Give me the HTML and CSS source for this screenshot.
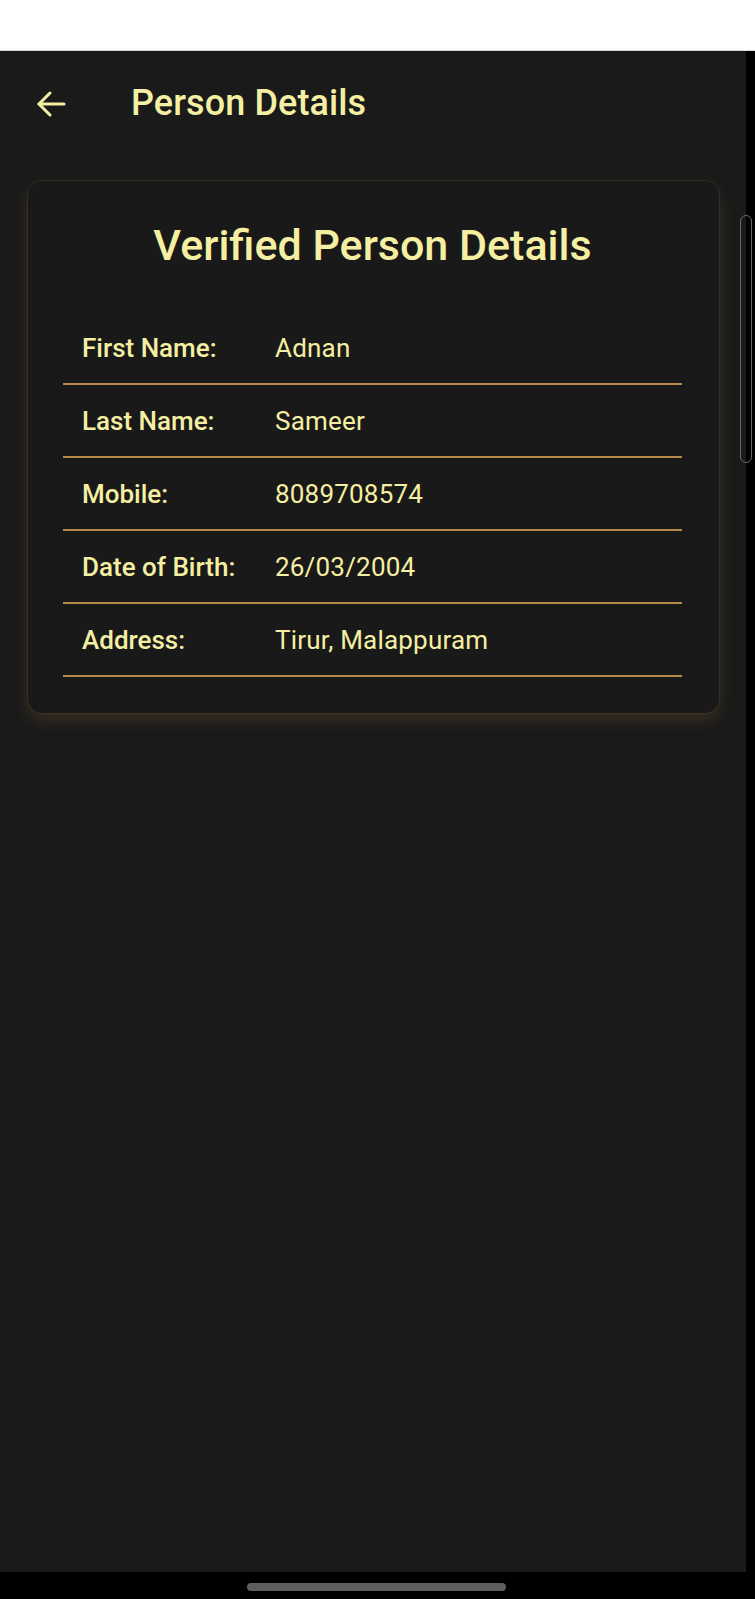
FILE: index.html
```html
<!DOCTYPE html>
<html lang="en">
<head>
<meta charset="utf-8">
<title>Person Details</title>
<link rel="stylesheet" href="styles.css">
</head>
<body>
<div class="statusbar"></div>
<div class="device">
  <div class="screen">
    <header class="appbar">
      <button class="back" aria-label="Back">
        <svg width="30" height="26" viewBox="0 0 30 26" fill="none" stroke="currentColor" stroke-width="3" stroke-linecap="round" stroke-linejoin="round"><path d="M28 13H3"/><path d="M14 2L3 13L14 24"/></svg>
      </button>
      <h1 class="appbar-title">Person Details</h1>
    </header>
    <section class="card">
      <h2 class="card-title">Verified Person Details</h2>
      <div class="rows">
        <div class="row"><span class="label">First Name:</span><span class="value">Adnan</span></div>
        <div class="row"><span class="label">Last Name:</span><span class="value">Sameer</span></div>
        <div class="row"><span class="label">Mobile:</span><span class="value">8089708574</span></div>
        <div class="row"><span class="label">Date of Birth:</span><span class="value">26/03/2004</span></div>
        <div class="row"><span class="label">Address:</span><span class="value">Tirur, Malappuram</span></div>
      </div>
    </section>
    <div class="scroll-thumb"></div>
  </div>
  <div class="edge"></div>
</div>
<div class="navbar"><div class="pill"></div></div>
</body>
</html>
```
FILE: styles.css
```css
html, body {
  margin: 0;
  padding: 0;
}
body {
  width: 755px;
  height: 1599px;
  background: #000;
  font-family: Roboto, "Noto Sans", "Liberation Sans", sans-serif;
  color: #f4efa2;
  overflow: hidden;
}
.statusbar {
  height: 51px;
  background: #ffffff;
  border-bottom: 1px solid #d8d8d8;
  box-sizing: border-box;
}
.device {
  display: flex;
  height: 1521px;
}
.screen {
  position: relative;
  width: 746px;
  background: #1a1a1a;
  display: flex;
  flex-direction: column;
}
.edge {
  flex: 1;
  background: #000;
}
.appbar {
  height: 104px;
  display: flex;
  align-items: center;
  padding-left: 36px;
}
.back {
  background: none;
  border: 0;
  padding: 0;
  color: #f4efa2;
  width: 30px;
  height: 26px;
  display: flex;
  margin-top: 1px;
}
.appbar-title {
  margin: 0 0 0 65px;
  font-size: 36px;
  font-weight: 500;
  letter-spacing: 0.1px;
  color: #f4efa2;
}
.card {
  margin: 26px 27px 0 28px;
  height: 532px;
  box-sizing: border-box;
  background: #1a1919;
  border-radius: 14px;
  box-shadow: 0 0 0 1px rgba(120, 95, 60, 0.2), 0 7px 16px rgba(170, 125, 60, 0.22);
  padding: 34px 37px 0 35px;
}
.card-title {
  margin: 0;
  text-align: center;
  font-size: 43px;
  font-weight: 500;
  letter-spacing: 0;
  line-height: 60px;
  color: #f4efa2;
}
.rows {
  margin-top: 37px;
}
.row {
  display: flex;
  align-items: center;
  height: 71px;
  border-bottom: 2px solid #b8894b;
  padding-left: 19px;
  font-size: 26px;
}
.label {
  width: 193px;
  flex: none;
  font-weight: 500;
  letter-spacing: 0;
}
.value {
  font-weight: 400;
  letter-spacing: 0.2px;
}
.scroll-thumb {
  position: absolute;
  left: 740px;
  top: 164px;
  width: 12px;
  height: 248px;
  border: 1.5px solid #6a6a6a;
  border-radius: 6px;
  box-sizing: border-box;
}
.navbar {
  height: 27px;
  background: #000;
  display: flex;
  justify-content: center;
  padding-top: 11px;
  box-sizing: border-box;
}
.pill {
  width: 259px;
  height: 8px;
  border-radius: 4px;
  background: #5e5e5e;
  margin-right: 3px;
}
```
